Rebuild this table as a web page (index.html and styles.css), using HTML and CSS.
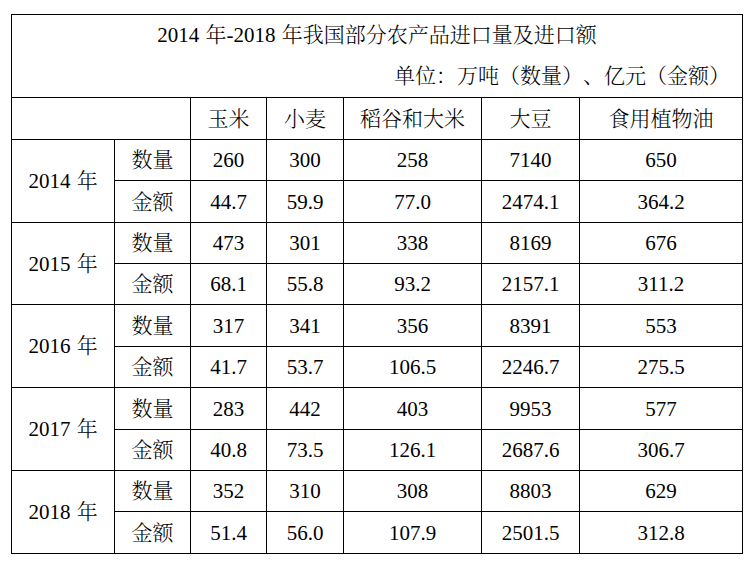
FILE: index.html
```html
<!DOCTYPE html>
<html lang="zh-CN">
<head>
<meta charset="utf-8">
<title>2014年-2018年我国部分农产品进口量及进口额</title>
<link rel="stylesheet" href="styles.css">
</head>
<body>
<table class="data">
  <colgroup>
    <col class="c-year"><col class="c-kind"><col class="c-a"><col class="c-b"><col class="c-c"><col class="c-d"><col class="c-e">
  </colgroup>
  <tr class="r-title">
    <td colspan="7" class="title-cell">
      <div class="title">2014 年-2018 年我国部分农产品进口量及进口额</div>
      <div class="unit">单位：万吨（数量）、亿元（金额）</div>
    </td>
  </tr>
  <tr class="r-head">
    <td colspan="2"></td><td>玉米</td><td>小麦</td><td>稻谷和大米</td><td>大豆</td><td>食用植物油</td>
  </tr>
  <tr class="r41"><td rowspan="2">2014 年</td><td>数量</td><td>260</td><td>300</td><td>258</td><td>7140</td><td>650</td></tr>
  <tr class="r42"><td>金额</td><td>44.7</td><td>59.9</td><td>77.0</td><td>2474.1</td><td>364.2</td></tr>
  <tr class="r41"><td rowspan="2">2015 年</td><td>数量</td><td>473</td><td>301</td><td>338</td><td>8169</td><td>676</td></tr>
  <tr class="r41"><td>金额</td><td>68.1</td><td>55.8</td><td>93.2</td><td>2157.1</td><td>311.2</td></tr>
  <tr class="r42"><td rowspan="2">2016 年</td><td>数量</td><td>317</td><td>341</td><td>356</td><td>8391</td><td>553</td></tr>
  <tr class="r41"><td>金额</td><td>41.7</td><td>53.7</td><td>106.5</td><td>2246.7</td><td>275.5</td></tr>
  <tr class="r42"><td rowspan="2">2017 年</td><td>数量</td><td>283</td><td>442</td><td>403</td><td>9953</td><td>577</td></tr>
  <tr class="r41"><td>金额</td><td>40.8</td><td>73.5</td><td>126.1</td><td>2687.6</td><td>306.7</td></tr>
  <tr class="r41"><td rowspan="2">2018 年</td><td>数量</td><td>352</td><td>310</td><td>308</td><td>8803</td><td>629</td></tr>
  <tr class="r42"><td>金额</td><td>51.4</td><td>56.0</td><td>107.9</td><td>2501.5</td><td>312.8</td></tr>
</table>
</body>
</html>
```
FILE: styles.css
```css
html, body {
  margin: 0;
  padding: 0;
  background: #fff;
}
body {
  padding: 14px 0 0 11px;
  font-family: "Liberation Serif", "Noto Serif CJK SC", "Noto Sans CJK SC", serif;
  font-size: 21px;
  font-weight: 300;
  color: #000;
  word-spacing: 1px;
  text-spacing-trim: space-all;
}
.data {
  border-collapse: collapse;
  table-layout: fixed;
  width: 731px;
}
.data td {
  border: 1px solid #000;
  padding: 0;
  text-align: center;
  vertical-align: middle;
  line-height: 24px;
  white-space: nowrap;
}
.c-year { width: 103px; }
.c-kind { width: 76px; }
.c-a { width: 76px; }
.c-b { width: 77px; }
.c-c { width: 138px; }
.c-d { width: 98px; }
.c-e { width: 163px; }
.r-title td { height: 81px; }
.r-head td { height: 41px; }
.r41 td { height: 40px; }
.r42 td { height: 41px; }
.title-cell { vertical-align: top; }
.title {
  line-height: 41px;
  text-align: center;
}
.unit {
  line-height: 41px;
  text-align: right;
  padding-right: 12px;
}
```
